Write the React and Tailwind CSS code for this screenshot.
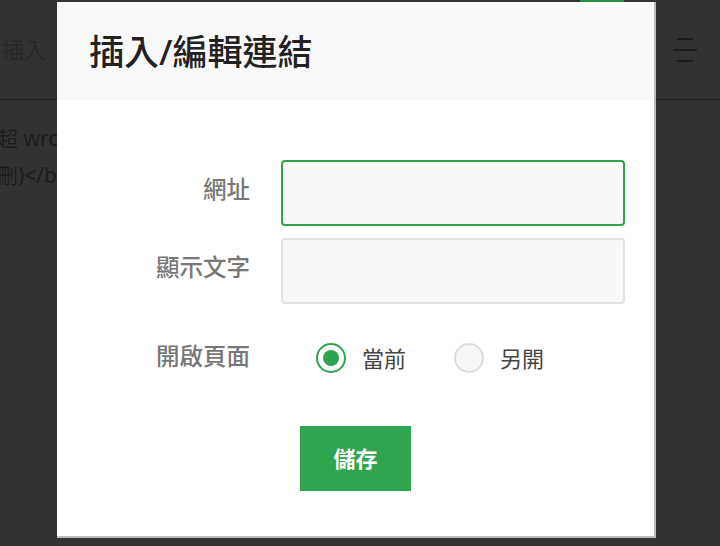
import React from 'react';

const font = "font-['Noto_Sans','Noto_Sans_CJK_TC',sans-serif]";

const Radio = ({ checked, label }) => (
  <label className="flex items-center gap-[16px]">
    <span
      className={
        checked
          ? 'w-[30px] h-[30px] rounded-full border-2 border-[#2ea44f] bg-white flex items-center justify-center'
          : 'w-[30px] h-[30px] rounded-full border-2 border-[#dcdcdc] bg-[#f6f6f6]'
      }
    >
      {checked && <span className="w-[16px] h-[16px] rounded-full bg-[#2ea44f]" />}
    </span>
    <span className="text-[22px] text-[#444] leading-none">{label}</span>
  </label>
);

const App = () => {
  return (
    <div className={`relative w-[720px] h-[546px] overflow-hidden bg-white ${font}`}>
      {/* page behind the dialog */}
      <div className="h-[100px] border-b border-[#999] flex items-center justify-between pl-[2px] pr-[23px]">
        <span className="text-[22px] text-[#c4c4c4]">插入</span>
        <div className="flex flex-col items-center gap-[9px]">
          <span className="block w-[16px] h-[2px] bg-[#888]" />
          <span className="block w-[24px] h-[2px] bg-[#888]" />
          <span className="block w-[16px] h-[2px] bg-[#888]" />
        </div>
      </div>
      <div className="pt-[20px] text-[21px] leading-[37px] text-[#888] -ml-[3px]">
        <p>超 wro</p>
        <p>刪)&lt;/b</p>
      </div>

      {/* overlay */}
      <div className="absolute inset-0 bg-black/80" />
      <div className="absolute left-[580px] top-0 w-[44px] h-[2px] bg-[#2e8a46]" />

      {/* dialog */}
      <div className="absolute left-[57px] top-[2px] w-[599px] h-[536px] bg-white border-r-2 border-b-2 border-[#bdbdbd] flex flex-col">
        <div className="h-[98px] bg-[#f9f9f9] flex items-center pl-[32px]">
          <h2 className="text-[35px] font-medium text-[#222] leading-none">插入/編輯連結</h2>
        </div>
        <div className="pt-[60px] grid grid-cols-[193px_344px] gap-x-[31px] items-center">
          <span className="pb-[6px] text-right text-[23.5px] font-medium text-[#777]">網址</span>
          <input
            className="h-[66px] rounded-[4px] border-2 border-[#2ea44f] bg-[#f8f8f8] outline-none px-3"
          />
          <span className="mt-[12px] pb-[6px] text-right text-[23.5px] font-medium text-[#777]">顯示文字</span>
          <input
            className="mt-[12px] h-[66px] rounded-[4px] border-2 border-[#e2e2e2] bg-[#f8f8f8] outline-none px-3"
          />
          <span className="mt-[35px] pb-[2px] text-right text-[23.5px] font-medium text-[#777]">開啟頁面</span>
          <div className="mt-[35px] h-[30px] flex items-center gap-[48px] pl-[35px]">
            <Radio checked label="當前" />
            <Radio label="另開" />
          </div>
        </div>
        <div className="mt-[50px] flex justify-center">
          <button className="w-[111px] h-[65px] bg-[#2fa550] text-white text-[22px] font-bold">
            儲存
          </button>
        </div>
      </div>
    </div>
  );
};

export default App;
